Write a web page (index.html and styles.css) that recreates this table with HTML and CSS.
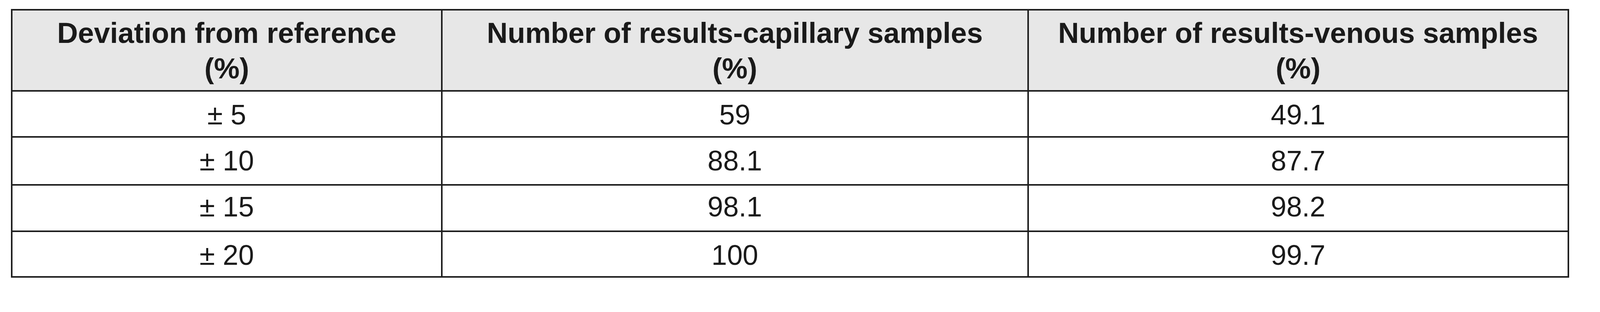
FILE: index.html
```html
<!DOCTYPE html>
<html lang="en">
<head>
<meta charset="utf-8">
<title>Deviation table</title>
<link rel="stylesheet" href="styles.css">
</head>
<body>
<table class="results">
  <colgroup>
    <col class="c1">
    <col class="c2">
    <col class="c3">
  </colgroup>
  <thead>
    <tr>
      <th>Deviation from reference<br>(%)</th>
      <th>Number of results-capillary samples<br>(%)</th>
      <th>Number of results-venous samples<br>(%)</th>
    </tr>
  </thead>
  <tbody>
    <tr class="r1"><td>± 5</td><td>59</td><td>49.1</td></tr>
    <tr class="r2"><td>± 10</td><td>88.1</td><td>87.7</td></tr>
    <tr class="r3"><td>± 15</td><td>98.1</td><td>98.2</td></tr>
    <tr class="r4"><td>± 20</td><td>100</td><td>99.7</td></tr>
  </tbody>
</table>
</body>
</html>
```

FILE: styles.css
```css
:root {
  --u: calc(100vw / 4334);
}

html, body {
  margin: 0;
  padding: 0;
  background: #ffffff;
}

body {
  padding: calc(24 * var(--u)) 0 0 calc(30 * var(--u));
  font-family: "Liberation Sans", Arial, sans-serif;
  color: #1a1a1a;
}

.results {
  table-layout: fixed;
  width: calc(4220 * var(--u));
  border-collapse: separate;
  border-spacing: 0;
  border-left: calc(5 * var(--u)) solid #1e1e1e;
  border-top: calc(5 * var(--u)) solid #1e1e1e;
}

.c1 { width: calc(1164 * var(--u)); }
.c2 { width: calc(1588 * var(--u)); }
.c3 { width: calc(1463 * var(--u)); }

.results th,
.results td {
  border-right: calc(5 * var(--u)) solid #1e1e1e;
  border-bottom: calc(5 * var(--u)) solid #1e1e1e;
  padding-left: 0;
  padding-right: 0;
  text-align: center;
  vertical-align: top;
}

.results th {
  background: #e7e7e7;
  font-weight: bold;
  font-size: calc(78 * var(--u));
  line-height: calc(96 * var(--u));
  padding-top: calc(14 * var(--u));
  padding-bottom: calc(10 * var(--u));
}

.results td {
  background: #ffffff;
  font-weight: normal;
  font-size: calc(76 * var(--u));
  line-height: calc(76 * var(--u));
}

.r1 td { padding-top: calc(26 * var(--u)); padding-bottom: calc(19 * var(--u)); }
.r2 td { padding-top: calc(25 * var(--u)); padding-bottom: calc(25 * var(--u)); }
.r3 td { padding-top: calc(20 * var(--u)); padding-bottom: calc(25 * var(--u)); }
.r4 td { padding-top: calc(26 * var(--u)); padding-bottom: calc(18 * var(--u)); }
```
